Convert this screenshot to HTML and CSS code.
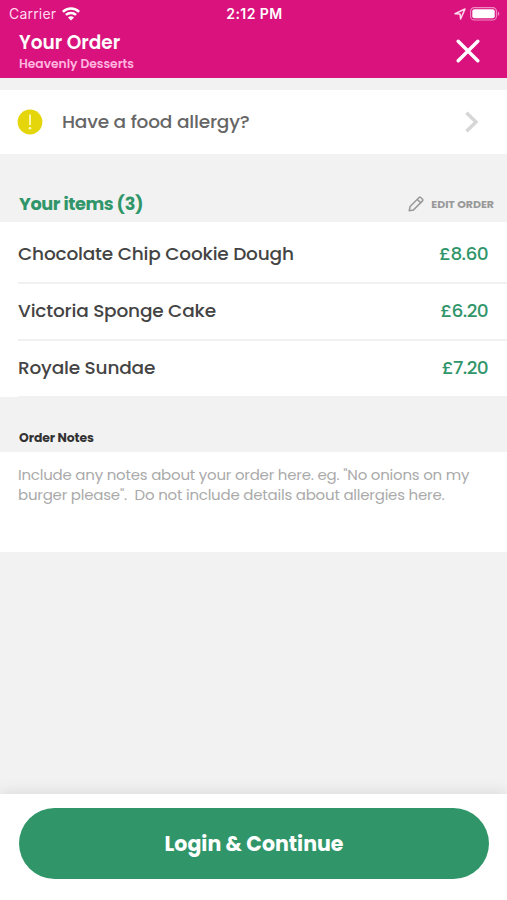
FILE: index.html
```html
<!DOCTYPE html>
<html lang="en">
<head>
<meta charset="utf-8">
<meta name="viewport" content="width=device-width, initial-scale=1">
<title>Your Order</title>
<link rel="stylesheet" href="styles.css">
</head>
<body>
<div class="app">
  <header class="header">
    <div class="status">
      <div class="carrier"><span>Carrier</span>
        <svg width="18" height="14" viewBox="0 0 18 14" fill="none" stroke="#fff" stroke-width="2.5"><path d="M.9 4.800C5.400.4 12.600.4 17.100 4.800M3.900 7.900c2.900-2.700 7.300-2.700 10.200 0"/><path d="M9 13.500l-3-3.100c1.700-1.500 4.300-1.500 6 0z" fill="#fff" stroke="none"/></svg>
      </div>
      <span class="time">2:12 PM</span>
      <div class="power">
        <svg width="12" height="12" viewBox="0 0 12 12" fill="none" stroke="#ffd9ee" stroke-width="1.500" stroke-linejoin="round"><path d="M1 5.800L11 1 6.600 11 6.100 6z"/></svg>
        <svg width="30" height="14" viewBox="0 0 30 14"><rect x=".6" y=".6" width="25.800" height="12.400" rx="3.600" fill="none" stroke="#f08cc4" stroke-width="1.100"/><rect x="2.300" y="2.300" width="22.400" height="9" rx="2" fill="#fff"/><path d="M27.800 4.600c2 .8 2 3.600 0 4.400z" fill="#f08cc4"/></svg>
      </div>
    </div>
    <div class="titlebar">
      <div>
        <h1 class="title">Your Order</h1>
        <p class="shop">Heavenly Desserts</p>
      </div>
      <svg class="close" width="24" height="24" viewBox="0 0 24 24" stroke="#fff" stroke-width="3.400" stroke-linecap="round"><path d="M2.200 2.200l19.600 19.600M21.800 2.200L2.200 21.800"/></svg>
    </div>
  </header>
  <section class="allergy">
    <svg width="26" height="26" viewBox="0 0 26 26"><circle cx="13" cy="13" r="12.400" fill="#e4d60b"/><path d="M13 5.500v10.500" stroke="#fffbc0" stroke-width="1.800"/><circle cx="13" cy="19.300" r="1.300" fill="#fffbc0"/></svg>
    <span class="question">Have a food allergy?</span>
    <svg class="chevron" width="14" height="22" viewBox="0 0 14 22" fill="none" stroke="#d6d6d6" stroke-width="3.400"><path d="M1.500 1.800L11 11 1.500 20.200"/></svg>
  </section>
  <div class="items-head">
    <h2>Your items (3)</h2>
    <div class="edit">
      <svg width="16" height="16" viewBox="0 0 16 16" fill="none" stroke="#999" stroke-width="1.500" stroke-linejoin="round"><path d="M1.200 14.800l.9-4.300 9-9q.8-.7 1.600 0l1.800 1.800q.7.800 0 1.600l-9 9zM9.300 3.400l3.300 3.300"/></svg>
      <span>EDIT ORDER</span>
    </div>
  </div>
  <ul class="items">
    <li><span>Chocolate Chip Cookie Dough</span><b>£8.60</b></li>
    <li><span>Victoria Sponge Cake</span><b>£6.20</b></li>
    <li><span>Royale Sundae</span><b>£7.20</b></li>
  </ul>
  <h3 class="notes-head">Order Notes</h3>
  <div class="notes">Include any notes about your order here. eg. "No onions on my<br>burger please".&nbsp; Do not include details about allergies here.</div>
  <footer class="footer"><button>Login &amp; Continue</button></footer>
</div>
</body>
</html>
```
FILE: styles.css
```css
* { box-sizing: border-box; margin: 0; padding: 0; }
body { font-family: Poppins, Inter, sans-serif; color: #444; }
.app { height: 900px; display: flex; flex-direction: column; background: #f2f2f2; overflow: hidden; }
svg { display: block; flex: none; }
.header { height: 78px; background: #da127d; color: #fff; }
.status { height: 27px; display: grid; grid-template-columns: 1fr auto 1fr; align-items: center; padding: 0 7px 0 9px; font-family: Inter, sans-serif; font-size: 14px; letter-spacing: .2px; }
.carrier { display: flex; align-items: center; gap: 6px; color: #ffd9ee; }
.time { font-weight: 600; letter-spacing: .45px; }
.power { display: flex; align-items: center; justify-content: flex-end; gap: 4px; }
.titlebar { display: flex; justify-content: space-between; padding: 4px 27px 0 19px; }
.title { font-size: 18.500px; line-height: 24px; font-weight: 600; }
.shop { font-size: 12.350px; line-height: 17px; font-weight: 600; color: #ffb5df; letter-spacing: -.05px; }
.close { margin-top: 8px; }
.allergy { height: 64px; margin-top: 12px; padding: 0 28px 0 17px; display: flex; align-items: center; background: #fff; }
.question { margin-left: 19px; padding-bottom: 1px; font-size: 18.500px; font-weight: 500; letter-spacing: -.17px; color: #666; }
.chevron { margin-left: auto; }
.items-head { height: 68px; padding: 31px 13px 0 19px; display: flex; justify-content: space-between; color: #30966a; }
h2 { font-size: 17.700px; line-height: 38px; font-weight: 700; letter-spacing: -.4px; }
.edit { display: flex; align-items: center; height: 38px; gap: 7px; font-size: 11px; font-weight: 700; letter-spacing: -.02px; color: #999; }
.edit span { padding-top: 1px; }
.items { list-style: none; background: #fff; padding: 5px 0 0 18px; height: 175px; }
.items li { height: 57px; display: flex; justify-content: space-between; align-items: center; padding: 0 19px 2px 0; font-size: 18.500px; font-weight: 500; letter-spacing: -.19px; border-bottom: 2px solid #f1f1f1; }
.items b { font-weight: 500; color: #30966a; letter-spacing: -.6px; }
.notes-head { height: 55px; padding: 31px 19px 0; font-size: 12.400px; line-height: 19px; font-weight: 700; letter-spacing: -.08px; color: #333; }
.notes { height: 100px; background: #fff; padding: 13px 18px; font-size: 15px; line-height: 20px; letter-spacing: -.22px; color: #aaa; white-space: nowrap; }
.footer { margin-top: auto; height: 106px; background: #fff; padding: 14px 18px 0 19px; box-shadow: 0 0 16px rgba(0,0,0,.12); }
button { width: 100%; height: 71px; border: 0; border-radius: 36px; background: #30966a; color: #fff; font: 700 20.500px Poppins, Inter, sans-serif; }
```
